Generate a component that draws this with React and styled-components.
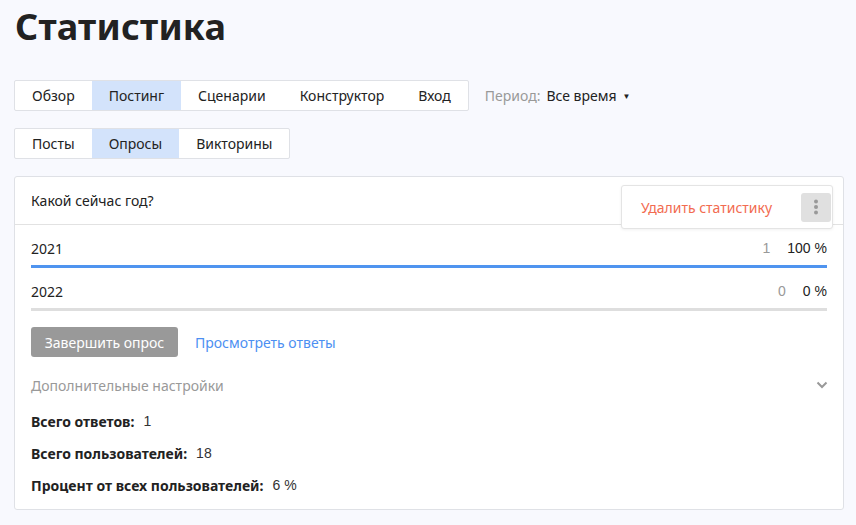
import React from 'react';
import styled, { createGlobalStyle } from 'styled-components';

const GlobalStyle = createGlobalStyle`
  html, body {
    margin: 0;
    padding: 0;
    background: #f8f9fe;
  }
  body {
    font-family: 'Noto Sans', 'Open Sans', sans-serif;
    color: #222;
    font-size: 14px;
  }
  * {
    box-sizing: border-box;
  }
`;

const Page = styled.div`
  padding: 0 12px 0 14px;
  width: 856px;
  height: 525px;
`;

const Title = styled.h1`
  margin: 0;
  padding: 2px 0 0 1px;
  font-size: 36px;
  line-height: 50px;
  font-weight: 700;
  color: #222;
  letter-spacing: 0.2px;
`;

const TopRow = styled.div`
  display: flex;
  align-items: center;
  gap: 16px;
  margin-top: 28px;
`;

const Tabs = styled.div`
  display: inline-flex;
  background: #fff;
  border: 1px solid #dfe1e6;
  border-radius: 2px;
  height: 31px;
`;

const Tab = styled.button`
  border: none;
  background: ${(p) => (p.$active ? '#d3e3fb' : 'transparent')};
  font-family: inherit;
  font-size: 14px;
  color: #222;
  padding: 0 17px;
  height: 100%;
  cursor: pointer;
`;

const Period = styled.div`
  display: flex;
  align-items: center;
  font-size: 14px;
  .label {
    color: #999;
    margin-right: 6px;
  }
  .arrow {
    font-size: 8px;
    margin-left: 6px;
  }
`;

const SubRow = styled.div`
  margin-top: 17px;
`;

const Card = styled.section`
  position: relative;
  margin-top: 17px;
  width: 830px;
  background: #fff;
  border: 1px solid #dfe1e6;
  border-radius: 3px;
`;

const Question = styled.div`
  height: 48px;
  padding: 0 16px;
  display: flex;
  align-items: center;
  border-bottom: 1px solid #e2e2e2;
  font-size: 14px;
`;

const Menu = styled.div`
  position: absolute;
  top: 8px;
  right: 10px;
  width: 212px;
  height: 44px;
  background: #fff;
  border: 1px solid #e4e4e4;
  border-radius: 3px;
  box-shadow: 0 1px 3px rgba(0, 0, 0, 0.06);
  display: flex;
  align-items: center;
  justify-content: space-between;
  padding: 0 1px 0 19px;
  .delete {
    color: #f26b50;
    font-size: 14px;
  }
`;

const Kebab = styled.button`
  width: 30px;
  height: 29px;
  border: none;
  border-radius: 3px;
  background: #e0e0e0;
  display: flex;
  align-items: center;
  justify-content: center;
  padding: 0;
`;

const Body = styled.div`
  padding: 0 16px 14px 16px;
`;

const Option = styled.div`
  padding-top: 13px;
`;

const OptionLine = styled.div`
  display: flex;
  align-items: center;
  height: 20px;
  font-size: 14px;
  white-space: nowrap;
  .count {
    margin-left: auto;
    color: #999;
    font-family: 'Liberation Sans', Arial, sans-serif;
  }
  .pct {
    margin-left: 17px;
    font-family: 'Liberation Sans', Arial, sans-serif;
  }
`;

const Bar = styled.div`
  margin-top: 7px;
  height: 3px;
  background: #dedede;
  div {
    height: 100%;
    background: #4f94ef;
  }
`;

const Actions = styled.div`
  display: flex;
  align-items: center;
  gap: 17px;
  margin-top: 16px;
`;

const FinishButton = styled.button`
  height: 30px;
  width: 147px;
  border: none;
  border-radius: 3px;
  background: #999;
  color: #fff;
  font-family: inherit;
  font-size: 14px;
`;

const LinkText = styled.a`
  color: #4c8ff2;
  font-size: 14px;
  text-decoration: none;
`;

const Extra = styled.div`
  margin-top: 18px;
  height: 20px;
  display: flex;
  align-items: center;
  justify-content: space-between;
  color: #999;
  font-size: 14px;
  svg {
    margin-right: -1px;
  }
`;

const Stat = styled.div`
  margin-top: ${(p) => (p.$first ? 16 : 12)}px;
  height: 20px;
  display: flex;
  align-items: center;
  font-size: 14px;
  b {
    font-weight: 700;
    margin-right: 9px;
  }
  span {
    font-family: 'Liberation Sans', Arial, sans-serif;
    color: #333;
  }
`;

const options = [
  { label: '2021', count: 1, pct: 100 },
  { label: '2022', count: 0, pct: 0 },
];

export default function App() {
  return (
    <Page>
      <GlobalStyle />
      <Title>Статистика</Title>
      <TopRow>
        <Tabs>
          <Tab>Обзор</Tab>
          <Tab $active>Постинг</Tab>
          <Tab>Сценарии</Tab>
          <Tab>Конструктор</Tab>
          <Tab>Вход</Tab>
        </Tabs>
        <Period>
          <span className='label'>Период:</span>
          <span>Все время</span>
          <span className='arrow'>▼</span>
        </Period>
      </TopRow>
      <SubRow>
        <Tabs>
          <Tab>Посты</Tab>
          <Tab $active>Опросы</Tab>
          <Tab>Викторины</Tab>
        </Tabs>
      </SubRow>
      <Card>
        <Question>Какой сейчас год?</Question>
        <Menu>
          <span className='delete'>Удалить статистику</span>
          <Kebab>
            <svg width='4' height='16' viewBox='0 0 4 16'>
              <circle cx='2' cy='2.5' r='2' fill='#999' />
              <circle cx='2' cy='8' r='2' fill='#999' />
              <circle cx='2' cy='13.5' r='2' fill='#999' />
            </svg>
          </Kebab>
        </Menu>
        <Body>
          {options.map((o) => (
            <Option key={o.label}>
              <OptionLine>
                <span>{o.label}</span>
                <span className='count'>{o.count}</span>
                <span className='pct'>{o.pct} %</span>
              </OptionLine>
              <Bar>
                <div style={{ width: `${o.pct}%` }} />
              </Bar>
            </Option>
          ))}
          <Actions>
            <FinishButton>Завершить опрос</FinishButton>
            <LinkText href='#'>Просмотреть ответы</LinkText>
          </Actions>
          <Extra>
            <span>Дополнительные настройки</span>
            <svg width='12' height='8' viewBox='0 0 12 8'>
              <path d='M1.5 1.5 L6 6 L10.5 1.5' fill='none' stroke='#999' strokeWidth='2' />
            </svg>
          </Extra>
          <Stat $first>
            <b>Всего ответов:</b>
            <span>1</span>
          </Stat>
          <Stat>
            <b>Всего пользователей:</b>
            <span>18</span>
          </Stat>
          <Stat>
            <b>Процент от всех пользователей:</b>
            <span>6 %</span>
          </Stat>
        </Body>
      </Card>
    </Page>
  );
}
